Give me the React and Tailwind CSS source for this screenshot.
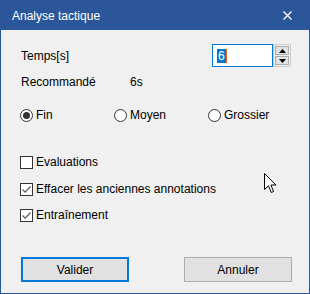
import React from 'react';

function Radio({ checked, label }) {
  return (
    <div className="flex items-center">
      <span className="w-[13px] h-[13px] rounded-full border border-[#333333] bg-white flex items-center justify-center">
        {checked && <span className="w-[7px] h-[7px] rounded-full bg-[#333333]"></span>}
      </span>
      <span className="ml-[3px]">{label}</span>
    </div>
  );
}

function Checkbox({ checked, label }) {
  return (
    <div className="flex items-center">
      <span className="w-[13px] h-[13px] border border-[#333333] bg-white flex items-center justify-center">
        {checked && (
          <svg width="11" height="11" viewBox="0 0 11 11">
            <path d="M1.5 5.5 L4.2 8.2 L9.5 2.5" fill="none" stroke="#5a5a5a" strokeWidth="1.2" />
          </svg>
        )}
      </span>
      <span className="ml-[3px]">{label}</span>
    </div>
  );
}

export default function App() {
  return (
    <div
      className="relative w-[310px] h-[294px] border border-[#2b579a] bg-[#f0f0f0] flex flex-col text-[12px] text-black"
      style={{ fontFamily: '"Liberation Sans", Arial, sans-serif' }}
    >
      {/* Title bar */}
      <div className="h-[29px] bg-[#2b579a] flex items-center justify-between pl-[11px] pr-[17px] text-white">
        <span>Analyse tactique</span>
        <svg width="9" height="9" viewBox="0 0 9 9">
          <path d="M0.5 0.5 L8.5 8.5 M8.5 0.5 L0.5 8.5" stroke="white" strokeWidth="1.3" />
        </svg>
      </div>

      <div className="flex flex-col pl-[19px]">
        {/* Temps */}
        <div className="mt-[14px] h-[23px] flex items-center">
          <span className="ml-[1px]">Temps[s]</span>
          <div className="ml-auto mr-[18px] flex h-[23px]">
            <div className="w-[61px] h-[23px] border border-[#0078d7] bg-white flex items-center pl-[4px]">
              <span className="bg-[#0078d7] text-white px-[1px] leading-[14px]">6</span>
              <span className="w-[1px] h-[14px] bg-[#f7630c]"></span>
            </div>
            <div className="w-[18px] h-[23px] border border-[#cccccc] bg-[#f0f0f0] flex flex-col gap-[1px] p-[1px]">
              <div className="flex-1 bg-[#e1e1e1] border border-[#adadad] flex items-center justify-center">
                <svg width="7" height="4" viewBox="0 0 7 4"><path d="M0 4 L3.5 0 L7 4 Z" fill="black" /></svg>
              </div>
              <div className="flex-1 bg-[#e1e1e1] border border-[#adadad] flex items-center justify-center">
                <svg width="7" height="4" viewBox="0 0 7 4"><path d="M0 0 L3.5 4 L7 0 Z" fill="black" /></svg>
              </div>
            </div>
          </div>
        </div>

        {/* Recommandé */}
        <div className="mt-[5px] h-[20px] flex items-center">
          <span className="ml-[1px] w-[109px]">Recommandé</span>
          <span>6s</span>
        </div>

        {/* Radios */}
        <div className="mt-[13px] h-[20px] flex items-center">
          <div className="w-[94px]"><Radio checked label="Fin" /></div>
          <div className="w-[94px]"><Radio label="Moyen" /></div>
          <Radio label="Grossier" />
        </div>

        {/* Checkboxes */}
        <div className="mt-[27px] h-[20px] flex items-center">
          <Checkbox label="Evaluations" />
        </div>
        <div className="mt-[7px] h-[20px] flex items-center">
          <Checkbox checked label="Effacer les anciennes annotations" />
        </div>
        <div className="mt-[6px] h-[20px] flex items-center">
          <Checkbox checked label="Entraînement" />
        </div>

        {/* Buttons */}
        <div className="mt-[32px] flex items-center pr-[17px]">
          <button className="ml-[1px] w-[108px] h-[25px] border-2 border-[#0078d7] bg-[#e1e1e1]">Valider</button>
          <button className="ml-auto w-[108px] h-[25px] border border-[#adadad] bg-[#e1e1e1]">Annuler</button>
        </div>
      </div>

      {/* Mouse cursor */}
      <svg className="absolute left-[263px] top-[172px]" width="13" height="21" viewBox="0 0 13 21">
        <path d="M0.5 0.5 L0.5 16.5 L4.5 12.8 L7.3 19.5 L9.6 18.5 L6.9 12 L12 12 Z" fill="white" stroke="black" strokeWidth="1" />
      </svg>
    </div>
  );
}
